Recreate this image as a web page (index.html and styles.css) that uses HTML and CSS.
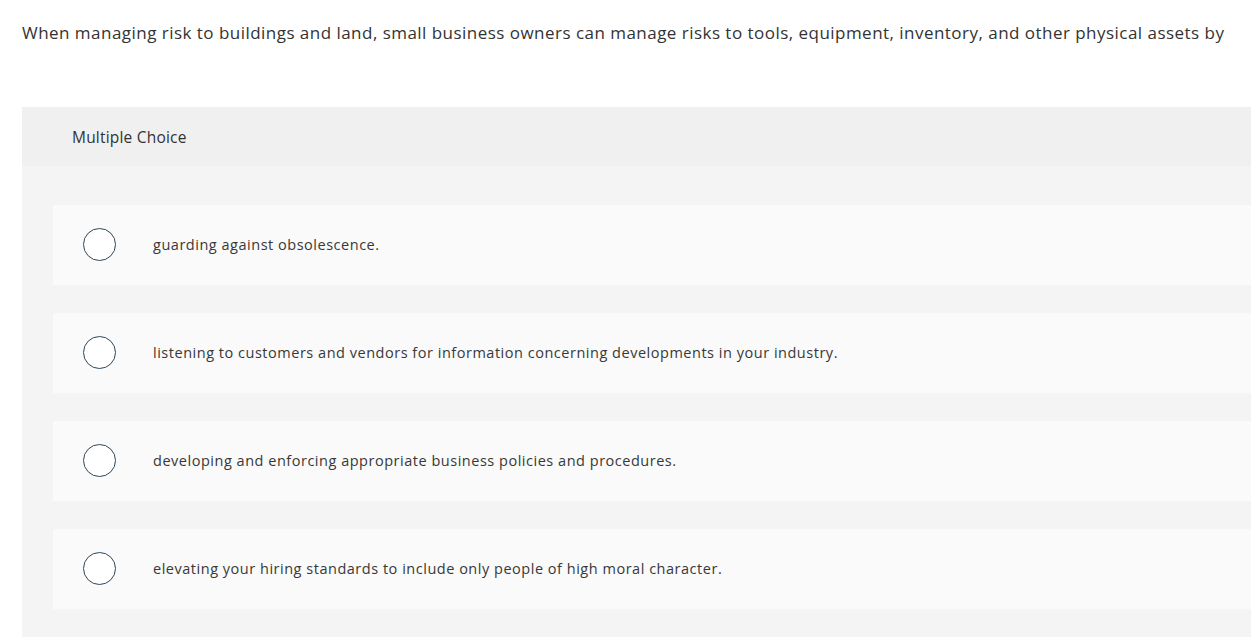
FILE: index.html
```html
<!DOCTYPE html>
<html lang="en">
<head>
<meta charset="utf-8">
<title>Multiple Choice</title>
<link rel="stylesheet" href="styles.css">
</head>
<body>
<div class="page">
  <p class="question">When managing risk to buildings and land, small business owners can manage risks to tools, equipment, inventory, and other physical assets by</p>
  <section class="panel">
    <div class="panel-head">Multiple Choice</div>
    <div class="panel-body">
      <label class="option"><span class="radio"></span><span class="opt-text">guarding against obsolescence.</span></label>
      <label class="option"><span class="radio"></span><span class="opt-text">listening to customers and vendors for information concerning developments in your industry.</span></label>
      <label class="option"><span class="radio"></span><span class="opt-text">developing and enforcing appropriate business policies and procedures.</span></label>
      <label class="option"><span class="radio"></span><span class="opt-text">elevating your hiring standards to include only people of high moral character.</span></label>
    </div>
  </section>
</div>
</body>
</html>
```

FILE: styles.css
```css
html, body {
  margin: 0;
  padding: 0;
  background: #ffffff;
  overflow: hidden;
}
body {
  font-family: "Open Sans", "Lato", sans-serif;
  color: #333333;
}
.page {
  width: 1280px;
  padding-left: 22px;
}
.question {
  margin: 0;
  padding-top: 22px;
  font-size: 17px;
  line-height: 22px;
  letter-spacing: 0.47px;
  color: #333333;
  white-space: nowrap;
}
.panel {
  margin-top: 63px;
  background: #f4f4f4;
}
.panel-head {
  height: 59px;
  box-sizing: border-box;
  padding-left: 50px;
  display: flex;
  align-items: center;
  background: #f0f0f0;
  font-size: 15.5px;
  letter-spacing: 0.2px;
  color: #333333;
}
.panel-body {
  padding: 39px 0 28px 31px;
  display: flex;
  flex-direction: column;
  gap: 28.5px;
}
.option {
  height: 79.5px;
  background: #fafafa;
  display: flex;
  align-items: center;
  padding-left: 30px;
}
.radio {
  width: 31px;
  height: 31px;
  border: 1.5px solid #2f4657;
  border-radius: 50%;
  background: #ffffff;
  flex: none;
}
.opt-text {
  margin-left: 37px;
  font-size: 14.5px;
  letter-spacing: 0.52px;
  color: #383838;
}
```
